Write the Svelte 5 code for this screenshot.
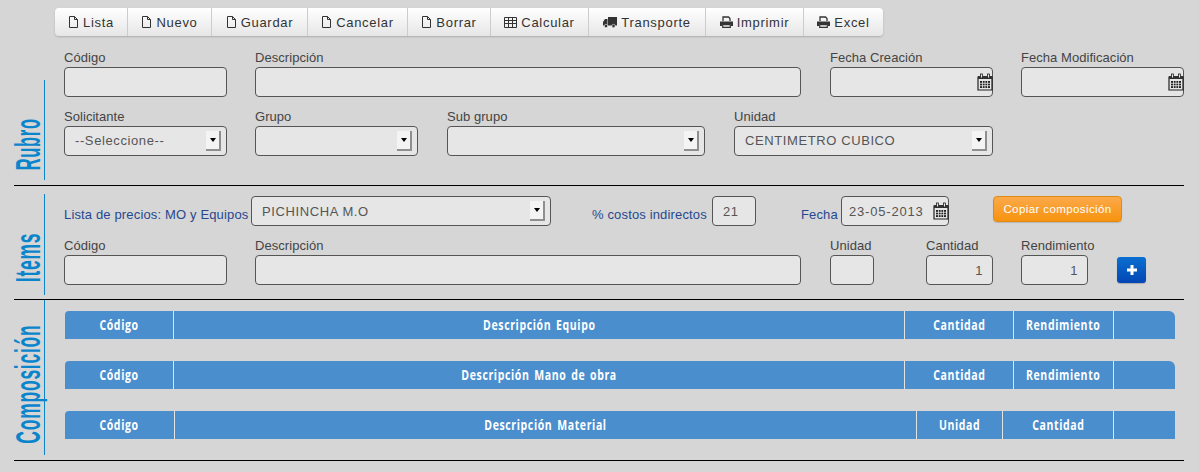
<script>
  const toolbar = [
    { label: 'Lista', icon: 'file', w: 73 },
    { label: 'Nuevo', icon: 'file', w: 84 },
    { label: 'Guardar', icon: 'file', w: 96 },
    { label: 'Cancelar', icon: 'file', w: 100 },
    { label: 'Borrar', icon: 'file', w: 83 },
    { label: 'Calcular', icon: 'table', w: 98 },
    { label: 'Transporte', icon: 'truck', w: 117 },
    { label: 'Imprimir', icon: 'print', w: 98 },
    { label: 'Excel', icon: 'print', w: 79 },
  ];

  const tables = [
    { cols: [['Código', 109], ['Descripción Equipo', 731], ['Cantidad', 109], ['Rendimiento', 100], ['', 61]], round: true },
    { cols: [['Código', 109], ['Descripción Mano de obra', 731], ['Cantidad', 109], ['Rendimiento', 100], ['', 61]], round: true },
    { cols: [['Código', 110], ['Descripción Material', 742], ['Unidad', 86], ['Cantidad', 111], ['', 61]], round: false },
  ];
</script>

{#snippet calendar()}
  <svg class="cal" width="16" height="18" viewBox="0 0 16 18">
    <path d="M1 4h14v13H1z" fill="#e6e6e6" stroke="#222" stroke-width="1.2" />
    <path d="M1 3h14v3H1z" fill="#333" />
    <rect x="3.5" y="1" width="2" height="4" fill="#e6e6e6" stroke="#222" stroke-width=".8" />
    <rect x="10.5" y="1" width="2" height="4" fill="#e6e6e6" stroke="#222" stroke-width=".8" />
    <path d="M3 8h10v7H3z" fill="#222" />
    <path d="M5.5 8v7M8 8v7M10.500 8v7M3 10.300h10M3 12.700h10" stroke="#e6e6e6" stroke-width=".8" />
  </svg>
{/snippet}

{#snippet arrow()}
  <span class="arrow"><i></i></span>
{/snippet}

{#snippet icon(name)}
  {#if name === 'file'}
    <svg width="11" height="12" viewBox="0 0 11 12"><path d="M1.500.5h5l3 3v8h-8zM6.500.5v3h3" fill="none" stroke="#333" /></svg>
  {:else if name === 'table'}
    <svg width="13" height="11" viewBox="0 0 13 11"><path d="M.5.500h12v10H.5zM.5 3.500h12M.5 6.500h12M4.500 .5v10M8.500 .5v10" fill="none" stroke="#333" /></svg>
  {:else if name === 'truck'}
    <svg width="14" height="11" viewBox="0 0 14 11"><path d="M5 0h9v8.500H5zM0 5l2-3h2.500v6.500H0z" fill="#333" /><circle cx="3" cy="9" r="1.700" fill="#333" stroke="#eee" stroke-width=".6" /><circle cx="10.500" cy="9" r="1.700" fill="#333" stroke="#eee" stroke-width=".6" /></svg>
  {:else}
    <svg width="13" height="12" viewBox="0 0 13 12"><path d="M3 5V1h5.500L10 2.500V5" fill="none" stroke="#333" stroke-width="1.300" /><path d="M0 5.500h13V10h-2V8H2v2H0z" fill="#333" /><path d="M2.700 8.700h7.600v2.700H2.700z" fill="none" stroke="#333" stroke-width="1.200" /></svg>
  {/if}
{/snippet}

<div class="page">
  <nav class="toolbar">
    {#each toolbar as b}
      <button style="width: {b.w}px">{@render icon(b.icon)}{b.label}</button>
    {/each}
  </nav>

  <section class="rubro">
    <div class="rail"><h2>Rubro</h2></div>
    <div class="body">
      <div class="row r1">
        <label class="w163">Código<input /></label>
        <label class="w546">Descripción<input /></label>
        <label class="w163">Fecha Creación<span class="wrap"><input />{@render calendar()}</span></label>
        <label class="w163">Fecha Modificación<span class="wrap"><input />{@render calendar()}</span></label>
      </div>
      <div class="row r2">
        <label class="w163">Solicitante<span class="wrap"><select><option>--Seleccione--</option></select>{@render arrow()}</span></label>
        <label class="w163">Grupo<span class="wrap"><select></select>{@render arrow()}</span></label>
        <label class="w258">Sub grupo<span class="wrap"><select></select>{@render arrow()}</span></label>
        <label class="w259">Unidad<span class="wrap"><select><option>CENTIMETRO CUBICO</option></select>{@render arrow()}</span></label>
      </div>
    </div>
  </section>

  <section class="items">
    <div class="rail"><h2>Items</h2></div>
    <div class="body">
      <div class="line">
        <span class="blue l1">Lista de precios: MO y Equipos</span>
        <span class="wrap w300"><select><option>PICHINCHA M.O</option></select>{@render arrow()}</span>
        <span class="blue l2">% costos indirectos</span>
        <input class="w44" value="21" />
        <span class="blue l3">Fecha</span>
        <span class="wrap w108"><input class="date" value="23-05-2013" />{@render calendar()}</span>
        <button class="copy">Copiar composición</button>
      </div>
      <div class="row r3">
        <label class="w163">Código<input /></label>
        <label class="w546">Descripción<input /></label>
        <label class="w44">Unidad<input /></label>
        <label class="w67 first">Cantidad<input class="num" value="1" /></label>
        <label class="w67 second">Rendimiento<input class="num" value="1" /></label>
        <button class="add" aria-label="Agregar"><svg width="10" height="10" viewBox="0 0 10 10"><path d="M5 0v10M0 5h10" stroke="#fff" stroke-width="3" /></svg></button>
      </div>
    </div>
  </section>

  <section class="comp">
    <div class="rail"><h2>Composición</h2></div>
    <div class="body tables">
      {#each tables as t}
        <table class:round={t.round}>
          <thead>
            <tr>
              {#each t.cols as [name, w]}
                <th style="width: {w}px"><span>{name}</span></th>
              {/each}
            </tr>
          </thead>
        </table>
      {/each}
    </div>
  </section>
</div>

<style>
  :global(body) {
    background: #d6d6d6;
  }

  .page {
    width: 1199px;
    height: 472px;
    padding-top: 8px;
    box-sizing: border-box;
    overflow: hidden;
    font-family: 'Liberation Sans', Arial, sans-serif;
    font-size: 13px;
    color: #444;
    letter-spacing: 0.05px;
  }

  .toolbar {
    display: flex;
    width: max-content;
    margin-left: 55px;
    height: 28px;
    border-radius: 4px;
    box-shadow: 0 1px 2px rgba(0, 0, 0, 0.2);
    overflow: hidden;
  }

  .toolbar button {
    display: flex;
    align-items: center;
    justify-content: center;
    gap: 4px;
    padding: 0;
    border: none;
    border-right: 1px solid #ccc;
    background: linear-gradient(#fff, #e6e6e6);
    font: inherit;
    letter-spacing: 0.7px;
    color: #333;
    box-sizing: border-box;
  }

  .toolbar button:last-child {
    border-right: none;
  }

  section {
    display: flex;
    width: 1170px;
    margin-left: 14px;
    border-bottom: 1px solid #000;
    box-sizing: border-box;
  }

  .rubro {
    height: 142px;
    margin-top: 8px;
  }

  .items {
    height: 114px;
  }

  .comp {
    height: 161px;
  }

  .rail {
    flex: none;
    width: 31px;
    box-sizing: border-box;
    border-right: 1px solid #0a85cc;
    position: relative;
    display: flex;
    align-items: center;
    justify-content: center;
  }

  .rubro .rail {
    margin: 36px 0 5px;
  }

  .items .rail {
    margin: 8px 0 4px;
  }

  .comp .rail {
    margin: 0 0 5px;
  }

  h2 {
    margin: 0;
    font-family: 'Liberation Sans', sans-serif;
    font-weight: 700;
    font-size: 35px;
    letter-spacing: 1.5px;
    line-height: 30px;
    color: #0a85cc;
    white-space: nowrap;
    writing-mode: vertical-rl;
  }

  .rubro h2 {
    transform: translate(-1px, 14px) rotate(180deg) scaleY(0.47);
  }

  .items h2 {
    transform: translate(-1px, 13px) rotate(180deg) scaleY(0.5);
  }

  .comp h2 {
    transform: translate(-1px, 7px) rotate(180deg) scaleY(0.5);
  }

  .body {
    flex: 1;
    min-width: 0;
  }

  .rubro .body {
    padding: 7px 0 0 19px;
  }

  .row {
    display: flex;
    align-items: flex-start;
  }

  label {
    display: flex;
    flex-direction: column;
    flex: none;
    gap: 2px;
    line-height: 14px;
    height: 46px;
  }

  .r1 {
    gap: 28px;
    margin-bottom: 13px;
  }

  .r1 label:nth-child(3) {
    margin-left: 1px;
  }

  .r2 {
    gap: 28px;
  }

  .r2 label:nth-child(3),
  .r2 label:nth-child(4) {
    margin-left: 1px;
  }

  .w163 { width: 163px; }
  .w546 { width: 546px; }
  .w258 { width: 258px; }
  .w259 { width: 259px; }
  .w44 { width: 44px; flex: none; }
  .w67 { width: 67px; }
  .w300 { width: 300px; flex: none; }
  .w108 { width: 108px; flex: none; }

  .wrap {
    position: relative;
    display: block;
    height: 30px;
  }

  input,
  select {
    display: block;
    width: 100%;
    height: 30px;
    box-sizing: border-box;
    margin: 0;
    padding: 0 10px;
    border: 1px solid #555;
    border-radius: 4px;
    background: #e6e6e6;
    font: inherit;
    letter-spacing: 0.6px;
    color: #555;
    appearance: none;
    outline: none;
  }

  .date {
    padding-left: 7px;
    letter-spacing: 0.8px;
  }

  .num {
    text-align: right;
    padding-right: 9px;
  }

  .cal {
    position: absolute;
    right: 0;
    top: 6px;
  }

  .arrow {
    position: absolute;
    right: 6px;
    top: 5px;
    width: 15px;
    height: 20px;
    box-sizing: border-box;
    background: #f4f4f4;
    border-right: 2px solid #8f8f8f;
    border-bottom: 2px solid #8f8f8f;
    display: flex;
    align-items: center;
    justify-content: center;
  }

  .arrow i {
    width: 0;
    height: 0;
    border: 3px solid transparent;
    border-top: 4px solid #000;
    border-bottom: none;
  }

  .items .body {
    padding: 10px 0 0 19px;
  }

  .line {
    display: flex;
    align-items: center;
    height: 30px;
  }

  .blue {
    flex: none;
    color: #27488f;
    white-space: nowrap;
    position: relative;
    top: 3px;
    letter-spacing: 0.15px;
  }

  .l1 { width: 187px; }
  .l2 { margin-left: 41px; width: 120px; }
  .l3 { margin-left: 45px; width: 40px; }

  .copy {
    flex: none;
    align-self: flex-start;
    width: 129px;
    height: 26px;
    margin-left: 44px;
    padding: 0;
    border: 1px solid #e08a12;
    border-radius: 4px;
    background: linear-gradient(#fba94a, #f7930f);
    color: #fff;
    font: inherit;
    font-size: 11.500px;
    letter-spacing: 0.4px;
    box-shadow: 0 1px 1px rgba(0, 0, 0, 0.15);
  }

  .r3 {
    margin-top: 13px;
  }

  .r3 label {
    margin-right: 28px;
  }

  .r3 label:nth-child(2) {
    margin-right: 29px;
  }

  .r3 label:nth-child(3) {
    margin-right: 52px;
  }

  .add {
    flex: none;
    width: 29px;
    height: 26px;
    margin: 18px 0 0 1px;
    padding: 0;
    border: none;
    border-radius: 3px;
    background: linear-gradient(#0a6fd0, #0346b4);
    display: flex;
    align-items: center;
    justify-content: center;
    box-shadow: 0 1px 1px rgba(0, 0, 0, 0.2);
  }

  .comp .tables {
    padding: 11px 0 0 20px;
    display: flex;
    flex-direction: column;
    gap: 22px;
  }

  table {
    width: 1110px;
    height: 28px;
    border-collapse: separate;
    border-spacing: 0;
    table-layout: fixed;
  }

  th {
    height: 28px;
    padding: 0 0 2px;
    box-sizing: border-box;
    background: #4a8ecd;
    border-right: 1px solid #e3e3e3;
    color: #fff;
    font-family: 'Open Sans', 'Liberation Sans', sans-serif;
    font-size: 15px;
    font-weight: 700;
    letter-spacing: 0.9px;
    word-spacing: 2px;
    text-align: center;
  }

  th span {
    display: inline-block;
    margin: 0 -20px;
    white-space: nowrap;
    transform: scaleX(0.7);
  }

  th:last-child {
    border-right: none;
  }

  th:first-child {
    border-top-left-radius: 4px;
  }

  .round th:last-child {
    border-top-right-radius: 6px;
  }
</style>
